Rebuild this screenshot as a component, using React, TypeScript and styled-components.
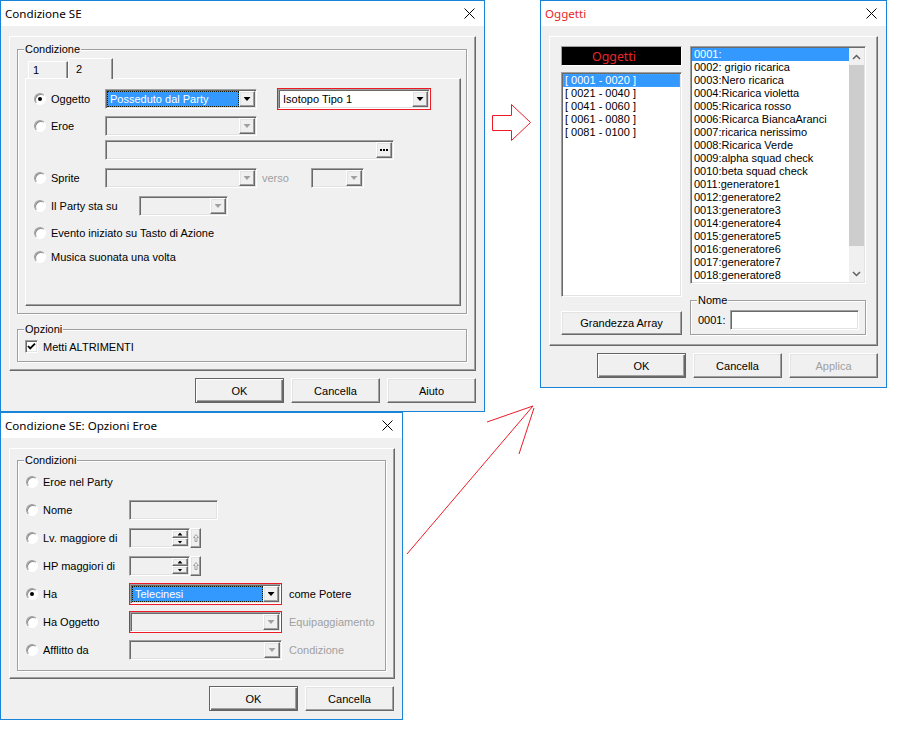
import React from "react";
import styled, { createGlobalStyle, css } from "styled-components";

const GlobalStyle = createGlobalStyle`
  html, body { margin: 0; padding: 0; background: #fff; }
  body {
    width: 920px; height: 730px; overflow: hidden;
    font-family: "Liberation Sans", Arial, sans-serif; font-size: 11px; color: #000;
  }
  *, *::before, *::after { box-sizing: border-box; }
`;

const sunken = css`
  border: 1px solid;
  border-color: #a0a0a0 #fff #fff #a0a0a0;
  box-shadow: inset 1px 1px 0 #696969, inset -1px -1px 0 #e3e3e3;
`;
const raised = css`
  border: 1px solid;
  border-color: #fff #696969 #696969 #fff;
  box-shadow: inset -1px -1px 0 #a0a0a0, inset 1px 1px 0 #e3e3e3;
`;

const Desktop = styled.div`
  position: relative;
  width: 920px;
  height: 730px;
  background: #fff;
`;

const Win = styled.div<{ $x: number; $y: number; $w: number; $h: number }>`
  position: absolute;
  left: ${(p) => p.$x}px;
  top: ${(p) => p.$y}px;
  width: ${(p) => p.$w}px;
  height: ${(p) => p.$h}px;
  border: 1px solid #1883d7;
  background: #f0f0f0;
  display: flex;
  flex-direction: column;
`;

const TitleBar = styled.div<{ $red?: boolean }>`
  height: 25px;
  flex: none;
  background: #fff;
  display: flex;
  align-items: center;
  justify-content: space-between;
  padding: 0 9px 0 4px;
  font-family: "Noto Sans", sans-serif;
  font-size: 11.6px;
  color: ${(p) => (p.$red ? "#e8262a" : "#000")};
`;

const Client = styled.div<{ $pr?: number }>`
  flex: 1;
  display: flex;
  flex-direction: column;
  padding: 10px ${(p) => p.$pr ?? 8}px 0 8px;
`;

const Panel = styled.div<{ $h: number; $pad: string }>`
  height: ${(p) => p.$h}px;
  flex: none;
  display: flex;
  flex-direction: column;
  padding: ${(p) => p.$pad};
  ${raised};
  box-shadow: inset -1px -1px 0 #a0a0a0;
`;

const ButtonRow = styled.div<{ $pr?: number }>`
  display: flex;
  justify-content: flex-end;
  gap: 7px;
  margin-top: 7px;
  padding-right: ${(p) => p.$pr ?? 0}px;
`;

const Button = styled.div<{ $default?: boolean; $disabled?: boolean; $w?: number; $h?: number; $mt?: number }>`
  width: ${(p) => p.$w ?? 89}px;
  height: ${(p) => p.$h ?? 25}px;
  margin-top: ${(p) => p.$mt ?? 0}px;
  flex: none;
  display: flex;
  align-items: center;
  justify-content: center;
  background: #f0f0f0;
  color: ${(p) => (p.$disabled ? "#a0a0a0" : "#000")};
  ${raised};
  ${(p) =>
    p.$default &&
    css`
      border-color: #646464;
      box-shadow: inset 1px 1px 0 #fff, inset -1px -1px 0 #696969, inset -2px -2px 0 #a0a0a0;
    `}
`;

const GroupBox = styled.fieldset<{ $h: number; $mt: number; $pad: string }>`
  margin: ${(p) => p.$mt}px 0 0 0;
  padding: ${(p) => p.$pad};
  min-inline-size: 0;
  height: ${(p) => p.$h}px;
  flex: none;
  border: 1px solid #a0a0a0;
  box-shadow: inset 1px 1px 0 #fff, 1px 1px 0 #fff;
`;

const Legend = styled.legend<{ $ml: number }>`
  margin-left: ${(p) => p.$ml}px;
  padding: 0 1px;
  line-height: 13px;
  background: #f0f0f0;
`;

const Stack = styled.div<{ $gap?: number }>`
  display: flex;
  flex-direction: column;
  gap: ${(p) => p.$gap ?? 0}px;
`;

const TabStrip = styled.div`
  display: flex;
  align-items: flex-end;
  height: 20px;
  padding-left: 3px;
`;

const Tab = styled.div<{ $active?: boolean; $w: number }>`
  position: relative;
  z-index: 1;
  width: ${(p) => p.$w}px;
  height: ${(p) => (p.$active ? 21 : 17)}px;
  margin-bottom: ${(p) => (p.$active ? -1 : 0)}px;
  padding-left: ${(p) => (p.$active ? 7 : 4)}px;
  display: flex;
  align-items: center;
  background: #f0f0f0;
  border: 1px solid;
  border-bottom: none;
  border-color: #fff #696969 transparent #fff;
  box-shadow: inset -1px 0 0 #a0a0a0;
`;

const TabPanel = styled.div`
  height: 228px;
  display: flex;
  flex-direction: column;
  padding: 9px 0 0 8px;
  ${raised};
  box-shadow: inset -1px -1px 0 #a0a0a0;
`;

const Row = styled.div<{ $mt?: number; $h?: number; $ml?: number }>`
  display: flex;
  align-items: center;
  flex: none;
  height: ${(p) => p.$h ?? 20}px;
  margin-top: ${(p) => p.$mt ?? 0}px;
  margin-left: ${(p) => p.$ml ?? 0}px;
  white-space: nowrap;
`;

const Radio = styled.span<{ $checked?: boolean }>`
  position: relative;
  width: 12px;
  height: 12px;
  flex: none;
  border-radius: 50%;
  background: #fff;
  border: 1px solid;
  border-color: #a0a0a0 #fff #fff #a0a0a0;
  box-shadow: inset 1px 1px 0 #8a8a8a;
  ${(p) =>
    p.$checked &&
    css`
      &::after {
        content: "";
        position: absolute;
        left: 3px;
        top: 3px;
        width: 4px;
        height: 4px;
        border-radius: 50%;
        background: #000;
      }
    `}
`;

const CheckBox = styled.span`
  width: 13px;
  height: 13px;
  flex: none;
  background: #fff;
  display: flex;
  align-items: center;
  justify-content: center;
  ${sunken};
`;

const Label = styled.span<{ $w?: number }>`
  margin-left: 5px;
  width: ${(p) => (p.$w ? `${p.$w}px` : "auto")};
  flex: none;
`;

const Note = styled.span<{ $disabled?: boolean; $ml: number; $w?: number }>`
  margin-left: ${(p) => p.$ml}px;
  width: ${(p) => (p.$w ? `${p.$w}px` : "auto")};
  flex: none;
  color: ${(p) => (p.$disabled ? "#a0a0a0" : "#000")};
`;

const Combo = styled.div<{ $w: number; $disabled?: boolean }>`
  width: ${(p) => p.$w}px;
  height: 20px;
  flex: none;
  display: flex;
  padding: 1px;
  background: ${(p) => (p.$disabled ? "#f0f0f0" : "#fff")};
  ${sunken};
`;

const ComboText = styled.div<{ $selected?: boolean }>`
  flex: 1;
  display: flex;
  align-items: center;
  padding-left: 3px;
  overflow: hidden;
  ${(p) =>
    p.$selected &&
    css`
      background: #3399ff;
      color: #fff;
      outline: 1px dotted #1a1a00;
      outline-offset: -1px;
    `}
`;

const DropButton = styled.div<{ $disabled?: boolean }>`
  width: 16px;
  height: 16px;
  flex: none;
  display: flex;
  align-items: center;
  justify-content: center;
  background: #f0f0f0;
  ${raised};
  &::after {
    content: "";
    width: 7px;
    height: 4px;
    background: ${(p) => (p.$disabled ? "#a0a0a0" : "#000")};
    clip-path: polygon(0 0, 100% 0, 50% 100%);
  }
`;

const RedBox = styled.div<{ $ml?: number }>`
  flex: none;
  display: flex;
  border: 1px solid #ed1c24;
  margin-left: ${(p) => p.$ml ?? 0}px;
`;

const Field = styled.div<{ $w: number; $white?: boolean }>`
  width: ${(p) => p.$w}px;
  height: 20px;
  flex: none;
  display: flex;
  align-items: center;
  justify-content: flex-end;
  padding: 1px;
  background: ${(p) => (p.$white ? "#fff" : "#f0f0f0")};
  ${sunken};
`;

const DotsButton = styled.div`
  width: 16px;
  height: 16px;
  display: flex;
  align-items: center;
  justify-content: center;
  gap: 1px;
  background: #f0f0f0;
  ${raised};
`;

const Dot = styled.span`
  width: 2px;
  height: 2px;
  background: #000;
`;

const SpinStack = styled.div`
  width: 16px;
  height: 16px;
  display: flex;
  flex-direction: column;
`;

const SpinBtn = styled.div<{ $down?: boolean }>`
  height: 8px;
  display: flex;
  align-items: center;
  justify-content: center;
  background: #f0f0f0;
  ${raised};
  &::after {
    content: "";
    width: 5px;
    height: 3px;
    background: #000;
    clip-path: ${(p) =>
      p.$down ? "polygon(0 0, 100% 0, 50% 100%)" : "polygon(50% 0, 100% 100%, 0 100%)"};
  }
`;

const SpinExtra = styled.div`
  width: 11px;
  height: 20px;
  flex: none;
  display: flex;
  align-items: center;
  justify-content: center;
  background: #f0f0f0;
  ${raised};
`;

const Columns = styled.div`
  display: flex;
  gap: 8px;
`;

const Column = styled.div<{ $w: number }>`
  width: ${(p) => p.$w}px;
  display: flex;
  flex-direction: column;
`;

const BlackHeader = styled.div`
  height: 20px;
  background: #000;
  color: #e8262a;
  font-family: "Noto Sans", sans-serif;
  font-size: 12.4px;
  display: flex;
  align-items: center;
  justify-content: center;
  padding-right: 15px;
  border: 1px solid;
  border-color: #a0a0a0 #fff #fff #a0a0a0;
`;

const ListBox = styled.div<{ $h: number; $mt?: number }>`
  height: ${(p) => p.$h}px;
  margin-top: ${(p) => p.$mt ?? 0}px;
  display: flex;
  padding: 1px;
  background: #fff;
  ${sunken};
`;

const ListItems = styled.div`
  flex: 1;
  display: flex;
  flex-direction: column;
  overflow: hidden;
`;

const ListItem = styled.div<{ $selected?: boolean; $focus?: boolean }>`
  height: 13px;
  line-height: 13px;
  padding-left: 2px;
  white-space: nowrap;
  flex: none;
  ${(p) =>
    p.$selected &&
    css`
      background: #3399ff;
      color: #fff;
    `}
  ${(p) =>
    p.$focus &&
    css`
      outline: 1px dotted #d08a3a;
      outline-offset: -1px;
    `}
`;

const ScrollBar = styled.div`
  width: 15px;
  flex: none;
  display: flex;
  flex-direction: column;
  background: #f0f0f0;
`;

const ScrollArrow = styled.div`
  height: 17px;
  flex: none;
  display: flex;
  align-items: center;
  justify-content: center;
`;

const ScrollThumb = styled.div`
  height: 181px;
  flex: none;
  background: #cdcdcd;
`;

const ScrollTrack = styled.div`
  flex: 1;
`;

const Overlay = styled.svg`
  position: absolute;
  left: 0;
  top: 0;
  pointer-events: none;
`;

const CloseIcon = () => (
  <svg width="11" height="11" viewBox="0 0 11 11">
    <path d="M0.5 0.5 L10.5 10.5 M10.5 0.5 L0.5 10.5" stroke="#000" strokeWidth="1" fill="none" />
  </svg>
);

const Chevron = ({ down }: { down?: boolean }) => (
  <svg width="9" height="6" viewBox="0 0 9 6">
    <polyline
      points={down ? "1,1 4.5,4.5 8,1" : "1,5 4.5,1.5 8,5"}
      stroke="#606060"
      strokeWidth="1.5"
      fill="none"
    />
  </svg>
);

const CheckMark = () => (
  <svg width="9" height="9" viewBox="0 0 9 9">
    <path d="M1 4 L3.2 6.4 L8 1.6" stroke="#000" strokeWidth="1.8" fill="none" />
  </svg>
);

const UpOutline = () => (
  <svg width="6" height="8" viewBox="0 0 6 8">
    <polygon points="3,0.5 5.5,3.5 4,3.5 4,7.5 2,7.5 2,3.5 0.5,3.5" stroke="#909090" strokeWidth="0.8" fill="none" />
  </svg>
);

const Spin = () => (
  <>
    <Field $w={61}>
      <SpinStack>
        <SpinBtn />
        <SpinBtn $down />
      </SpinStack>
    </Field>
    <SpinExtra>
      <UpOutline />
    </SpinExtra>
  </>
);

const leftItems = ["[ 0001 - 0020 ]", "[ 0021 - 0040 ]", "[ 0041 - 0060 ]", "[ 0061 - 0080 ]", "[ 0081 - 0100 ]"];
const rightItems = [
  "0001:",
  "0002: grigio ricarica",
  "0003:Nero ricarica",
  "0004:Ricarica violetta",
  "0005:Ricarica rosso",
  "0006:Ricarca BiancaAranci",
  "0007:ricarica nerissimo",
  "0008:Ricarica Verde",
  "0009:alpha squad check",
  "0010:beta squad check",
  ...Array.from({ length: 8 }, (_, i) => `00${11 + i}:generatore${i + 1}`),
];

export default function App() {
  return (
    <Desktop>
      <GlobalStyle />

      {/* Window 1: Condizione SE */}
      <Win $x={0} $y={0} $w={485} $h={412}>
        <TitleBar>
          <span>Condizione SE</span>
          <CloseIcon />
        </TitleBar>
        <Client>
          <Panel $h={335} $pad="0 8px 0 7px">
            <GroupBox $h={271} $mt={6} $pad="2px 5px 7px 7px">
              <Legend $ml={-1}>Condizione</Legend>
              <TabStrip>
                <Tab $w={40}>1</Tab>
                <Tab $w={45} $active>
                  2
                </Tab>
              </TabStrip>
              <TabPanel>
                <Row $h={22}>
                  <Radio $checked />
                  <Label $w={54}>Oggetto</Label>
                  <Combo $w={152}>
                    <ComboText $selected>Posseduto dal Party</ComboText>
                    <DropButton />
                  </Combo>
                  <RedBox $ml={20}>
                    <Combo $w={152}>
                      <ComboText>Isotopo Tipo 1</ComboText>
                      <DropButton />
                    </Combo>
                  </RedBox>
                </Row>
                <Row $mt={6}>
                  <Radio />
                  <Label $w={54}>Eroe</Label>
                  <Combo $w={152} $disabled>
                    <ComboText />
                    <DropButton $disabled />
                  </Combo>
                </Row>
                <Row $mt={4} $ml={71}>
                  <Field $w={289}>
                    <DotsButton>
                      <Dot />
                      <Dot />
                      <Dot />
                    </DotsButton>
                  </Field>
                </Row>
                <Row $mt={8}>
                  <Radio />
                  <Label $w={54}>Sprite</Label>
                  <Combo $w={152} $disabled>
                    <ComboText />
                    <DropButton $disabled />
                  </Combo>
                  <Note $disabled $ml={5} $w={49}>
                    verso
                  </Note>
                  <Combo $w={53} $disabled>
                    <ComboText />
                    <DropButton $disabled />
                  </Combo>
                </Row>
                <Row $mt={8}>
                  <Radio />
                  <Label $w={88}>Il Party sta su</Label>
                  <Combo $w={89} $disabled>
                    <ComboText />
                    <DropButton $disabled />
                  </Combo>
                </Row>
                <Row $mt={7}>
                  <Radio />
                  <Label>Evento iniziato su Tasto di Azione</Label>
                </Row>
                <Row $mt={4}>
                  <Radio />
                  <Label>Musica suonata una volta</Label>
                </Row>
              </TabPanel>
            </GroupBox>
            <GroupBox $h={39} $mt={9} $pad="4px 7px 0 7px">
              <Legend $ml={-1}>Opzioni</Legend>
              <Row $h={13}>
                <CheckBox>
                  <CheckMark />
                </CheckBox>
                <Label>Metti ALTRIMENTI</Label>
              </Row>
            </GroupBox>
          </Panel>
          <ButtonRow>
            <Button $default>OK</Button>
            <Button>Cancella</Button>
            <Button>Aiuto</Button>
          </ButtonRow>
        </Client>
      </Win>

      {/* Window 2: Opzioni Eroe */}
      <Win $x={0} $y={412} $w={403} $h={308}>
        <TitleBar>
          <span>Condizione SE: Opzioni Eroe</span>
          <CloseIcon />
        </TitleBar>
        <Client $pr={7}>
          <Panel $h={231} $pad="0 8px 0 7px">
            <GroupBox $h={217} $mt={5} $pad="5px 8px 0 8px">
              <Legend $ml={-2}>Condizioni</Legend>
              <Stack $gap={8}>
                <Row>
                  <Radio />
                  <Label $w={86}>Eroe nel Party</Label>
                </Row>
                <Row>
                  <Radio />
                  <Label $w={86}>Nome</Label>
                  <Field $w={89} />
                </Row>
                <Row>
                  <Radio />
                  <Label $w={86}>Lv. maggiore di</Label>
                  <Spin />
                </Row>
                <Row>
                  <Radio />
                  <Label $w={86}>HP maggiori di</Label>
                  <Spin />
                </Row>
                <Row>
                  <Radio $checked />
                  <Label $w={86}>Ha</Label>
                  <RedBox>
                    <Combo $w={151}>
                      <ComboText $selected>Telecinesi</ComboText>
                      <DropButton />
                    </Combo>
                  </RedBox>
                  <Note $ml={7}>come Potere</Note>
                </Row>
                <Row>
                  <Radio />
                  <Label $w={86}>Ha Oggetto</Label>
                  <RedBox>
                    <Combo $w={151} $disabled>
                      <ComboText />
                      <DropButton $disabled />
                    </Combo>
                  </RedBox>
                  <Note $disabled $ml={7}>
                    Equipaggiamento
                  </Note>
                </Row>
                <Row>
                  <Radio />
                  <Label $w={86}>Afflitto da</Label>
                  <Combo $w={153} $disabled>
                    <ComboText />
                    <DropButton $disabled />
                  </Combo>
                  <Note $disabled $ml={7}>
                    Condizione
                  </Note>
                </Row>
              </Stack>
            </GroupBox>
          </Panel>
          <ButtonRow $pr={1}>
            <Button $default>OK</Button>
            <Button>Cancella</Button>
          </ButtonRow>
        </Client>
      </Win>

      {/* Window 3: Oggetti */}
      <Win $x={540} $y={0} $w={347} $h={388}>
        <TitleBar $red>
          <span>Oggetti</span>
          <CloseIcon />
        </TitleBar>
        <Client>
          <Panel $h={310} $pad="9px 0 0 11px">
            <Columns>
              <Column $w={121}>
                <BlackHeader>Oggetti</BlackHeader>
                <ListBox $h={225} $mt={6}>
                  <ListItems>
                    {leftItems.map((t, i) => (
                      <ListItem key={t} $selected={i === 0} $focus={i === 0}>
                        {t}
                      </ListItem>
                    ))}
                  </ListItems>
                </ListBox>
                <Button $w={121} $h={24} $mt={14}>
                  Grandezza Array
                </Button>
              </Column>
              <Column $w={176}>
                <ListBox $h={238}>
                  <ListItems>
                    {rightItems.map((t, i) => (
                      <ListItem key={t} $selected={i === 0}>
                        {t}
                      </ListItem>
                    ))}
                  </ListItems>
                  <ScrollBar>
                    <ScrollArrow>
                      <Chevron />
                    </ScrollArrow>
                    <ScrollThumb />
                    <ScrollTrack />
                    <ScrollArrow>
                      <Chevron down />
                    </ScrollArrow>
                  </ScrollBar>
                </ListBox>
                <GroupBox $h={41} $mt={10} $pad="3px 6px 0 7px">
                  <Legend $ml={-1}>Nome</Legend>
                  <Row>
                    <Note $ml={0} $w={32}>
                      0001:
                    </Note>
                    <Field $w={129} $white />
                  </Row>
                </GroupBox>
              </Column>
            </Columns>
          </Panel>
          <ButtonRow>
            <Button $default>OK</Button>
            <Button>Cancella</Button>
            <Button $disabled>Applica</Button>
          </ButtonRow>
        </Client>
      </Win>

      <Overlay width="920" height="730" viewBox="0 0 920 730">
        <polygon
          points="492.5,115.5 511.5,115.5 511.5,104.5 530.5,122.5 511.5,140.5 511.5,130.5 492.5,130.5"
          fill="#fff"
          stroke="#ed1c24"
          strokeWidth="1"
        />
        <path
          d="M407 554 L533 406 M533 406 L487 422 M534 408 L519 454"
          stroke="#ed1c24"
          strokeWidth="1"
          fill="none"
        />
      </Overlay>
    </Desktop>
  );
}
